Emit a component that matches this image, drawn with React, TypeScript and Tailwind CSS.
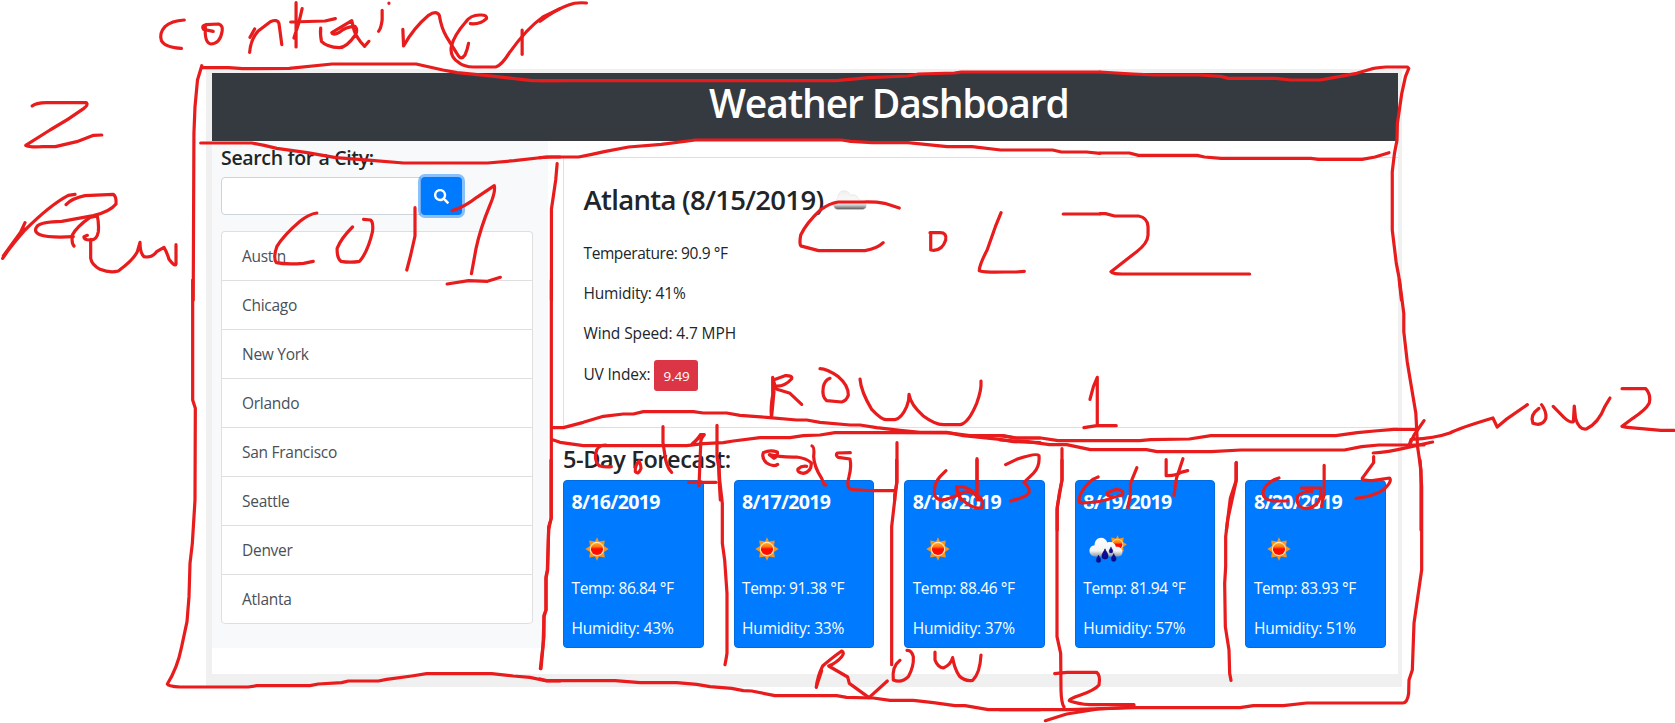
import { FaSearch } from "react-icons/fa";

const cities = ["Austin", "Chicago", "New York", "Orlando", "San Francisco", "Seattle", "Denver", "Atlanta"];

const forecast = [
  { date: "8/16/2019", icon: "sun", temp: "86.84", humidity: 43 },
  { date: "8/17/2019", icon: "sun", temp: "91.38", humidity: 33 },
  { date: "8/18/2019", icon: "sun", temp: "88.46", humidity: 37 },
  { date: "8/19/2019", icon: "rain", temp: "81.94", humidity: 57 },
  { date: "8/20/2019", icon: "sun", temp: "83.93", humidity: 51 },
];

const SUN_RAYS =
  "M0 -11.7 L2 -7.6 L7.8 -8.6 L7 -3 L11.7 0 L7 3 L7.8 8.6 L2 7.6 L0 11.7 L-2 7.6 L-7.8 8.6 L-7 3 L-11.7 0 L-7 -3 L-7.8 -8.6 L-2 -7.6 Z";

function Gradients() {
  return (
    <defs>
      <linearGradient id="sunCore" x1="0" y1="0" x2="0" y2="1">
        <stop offset="0" stopColor="#ffb020" />
        <stop offset="0.3" stopColor="#ff7a10" />
        <stop offset="0.5" stopColor="#ff0800" />
        <stop offset="1" stopColor="#ff1000" />
      </linearGradient>
      <linearGradient id="cloudFill" x1="0" y1="0" x2="0" y2="1">
        <stop offset="0" stopColor="#ffffff" />
        <stop offset="0.7" stopColor="#f4f4f4" />
        <stop offset="1" stopColor="#8f959c" />
      </linearGradient>
      <linearGradient id="greyCloud" x1="0" y1="0" x2="0" y2="1">
        <stop offset="0" stopColor="#f0f0f0" />
        <stop offset="0.6" stopColor="#fbfbfb" />
        <stop offset="0.78" stopColor="#c8c8c8" />
        <stop offset="1" stopColor="#505050" />
      </linearGradient>
    </defs>
  );
}

function SunIcon() {
  return (
    <svg className="size-[50px]" viewBox="-25 -25 50 50">
      <Gradients />
      <path d={SUN_RAYS} fill="#f7941d" />
      <circle r="7.2" fill="#ffe9b8" />
      <circle r="6.1" fill="url(#sunCore)" />
    </svg>
  );
}

function RainIcon() {
  const drop = "M0 -4.5 C0.6 -2.2 2.7 -0.6 2.7 1.7 A2.7 2.7 0 0 1 -2.7 1.7 C-2.7 -0.6 -0.6 -2.2 0 -4.5 Z";
  return (
    <svg className="size-[50px]" viewBox="0 0 50 50">
      <Gradients />
      <g transform="translate(34.5 20.5) scale(0.8)">
        <path d={SUN_RAYS} fill="#f7941d" />
        <circle r="7.2" fill="#ffe0a0" />
        <circle r="6.1" fill="url(#sunCore)" />
      </g>
      <path
        d="M12 32.5 C8.500 32.500 6.500 29.500 6.500 27 C6.500 23.500 8.800 21.500 11.500 21.300 C11.800 16.500 14.500 13.800 18 13.800 C21 13.800 23.300 15.600 24.300 18.500 C28.500 17 32.300 19 32.800 22.800 C36.500 22.500 39.500 24.500 39.500 28 C39.500 31 37.500 32.500 35 32.500 Z"
        fill="url(#cloudFill)"
      />
      <g fill="#0a0a9c" stroke="#06064e" strokeWidth="0.5">
        <path d={drop} transform="translate(22 30) scale(1.15)" />
        <path d={drop} transform="translate(28 26) scale(0.7)" />
        <path d={drop} transform="translate(15.500 34.800) scale(0.85)" />
        <path d={drop} transform="translate(30.700 33.500) scale(0.9)" />
      </g>
    </svg>
  );
}

function CloudIcon() {
  return (
    <svg className="mt-px ml-[10px] h-5 w-[34px]" viewBox="0 0 34 19" preserveAspectRatio="none">
      <Gradients />
      <path
        d="M5 18.500 C1.500 18.500 0.500 15.800 0.700 14 C0.900 11.200 2.600 9 4.700 8 C4.700 3.500 7.500 0.700 11 0.700 C14 0.700 16.300 2.500 17.500 5 C21 3.500 25 5.500 25.600 9.300 C30 9.500 33.300 11.500 33.300 15 C33.300 17.500 31.500 18.500 29 18.500 Z"
        fill="url(#greyCloud)"
        stroke="#dddddd"
        strokeWidth="0.5"
      />
    </svg>
  );
}

type InkGroup = { x: number; y: number; sx: number; sy: number; paths: string[] };

const W28 = 1 / 2.8;
const T3 = 1 / 3;

const ink: InkGroup[] = [
  {
    x: 0, y: 0, sx: W28, sy: T3,
    paths: [
      // outer frame: left side and top
      "M1568 242 H1490 L1410 232 L1365 227 L1280 218 L1240 210 L1165 192 H930 L810 205 L680 206 L640 203 H565",
      "M565 197 L553 240 L546 320 L543 400 L541 900",
      // header underline
      "M562 429 H705 L740 436 L775 445 L860 458 L940 473 L1040 481 L1130 489 H1365 L1440 482 L1530 471 H1568",
      // container
      "M516 60 Q480 62 462 80 Q445 100 452 122 Q462 142 508 145",
      "M597 94 L570 88 Q563 78 576 74 L612 72 Q625 76 622 94 Q616 132 590 132 Q572 128 575 80",
      "M713 87 L700 112 M699 157 Q702 118 722 94 L757 65 Q777 56 781 70 Q785 100 789 134",
      "M829 8 V141 M846 26 Q838 70 823 114 M814 66 L910 63 L939 56",
      "M929 98 L985 62 L990 86 Q994 104 1010 126 L1021 139 L1033 124 M929 98 Q932 108 950 97 Q968 80 994 79 Q1003 90 995 105 Q970 143 950 143 Q915 141 900 124 Q896 100 898 84",
      "M1070 31 V60 Q1067 85 1060 94 M1089 9 V10",
      "M1128 88 L1130 138 Q1158 84 1200 46 Q1222 30 1230 46 Q1236 85 1250 110 Q1270 145 1282 165 Q1291 182 1302 165 Q1309 148 1312 130",
      "M1317 71 Q1345 74 1362 56 Q1365 44 1345 45 Q1318 44 1304 66 Q1272 105 1264 138 Q1258 170 1285 188 Q1300 200 1325 201 L1388 201 Q1405 195 1425 160 Q1475 85 1520 51 L1568 26",
      "M1462 90 V163",
      // Z
      "M90 318 Q100 309 130 308 H242 Q248 314 235 325 Q190 360 140 390 L72 436 Q80 442 120 440 H155 L215 425 L262 406 L285 405",
      // col 1
      "M887 639 Q865 642 840 664 Q795 705 775 740 Q764 775 774 788 Q800 794 850 790 L877 784",
      "M987 681 Q955 715 944 745 Q943 775 955 784 Q980 789 1007 784 Q1030 755 1043 695 Q1046 668 1038 660 L1018 658",
      "M1162 623 V708 L1150 765 L1139 810",
      "M1266 632 Q1300 622 1335 592 L1384 557 Q1388 575 1372 615 Q1345 685 1333 745 L1320 821",
      "M1252 852 L1312 842 L1365 844 L1401 832",
      // divider after column 1
      "M1560 491 L1556 540 L1544 628 V900",
    ],
  },
  {
    x: 540, y: 0, sx: W28, sy: T3,
    paths: [
      "M0 64 Q45 28 80 15 Q100 6 130 9",
      "M1568 216 H1180 L1160 219 L1060 222 L1030 228 L920 233 L830 242 H0",
      "M0 473 L30 471 H108 L145 463 L180 455 L248 441 L340 433 L435 420 H845 L870 424 L930 428 H1030 L1140 440 H1210 L1290 450 H1435 L1460 456 H1530 L1568 460",
      "M1006 624 L965 610 Q940 605 905 606 H835 Q810 610 785 630 Q745 670 730 705 Q724 740 735 739 L780 752 H910 Q945 745 961 728",
      "M1094 700 V750 Q1125 756 1136 720 Q1140 698 1120 698 H1092",
      "M1291 638 L1275 680 L1252 750 Q1230 795 1230 812 Q1250 818 1300 816 H1333 L1356 814",
      "M1465 642 H1568",
    ],
  },
  {
    x: 1100, y: 0, sx: 1 / 2.727, sy: T3,
    paths: [
      "M822 900 L815 830 L808 790 L797 690 V515 L803 460 L810 420 L811 370 L823 280 L833 230 L842 205 L838 201 H780 Q745 204 740 207 L700 220 L640 232 L600 240 H520 L480 235 H350 L330 229 L270 225 H150 L90 222 L0 216",
      "M0 459 H80 L105 466 H265 L285 471 L330 475 H575 L595 478 H715 L750 471 L788 458",
      "M0 641 H15 L40 648 H105 Q130 653 131 680 V705 Q130 730 100 755 L30 815 Q35 822 60 822 H408",
    ],
  },
  {
    x: 160, y: 280, sx: T3, sy: T3,
    paths: [
      "M98 0 V360 L106 385 L105 660 L97 790 L90 850 L87 950 L81 1025 L65 1100 Q52 1165 22 1212 Q25 1219 60 1221 H265 L290 1217 H450 L475 1212 L545 1208 L565 1203 H655 L680 1198 L755 1188 L800 1181 H995 L1060 1188 L1110 1192 L1160 1203 H1200",
      "M1174 0 V715 L1166 740 L1163 870 L1158 895 V990 L1152 1005 V1070 L1141 1166",
    ],
  },
  {
    x: 540, y: 280, sx: T3, sy: T3,
    paths: [
      // long strokes under the current-weather card
      "M40 443 H70 L130 427 L190 409 L250 402 H280 L310 395 H460 L490 399 H560 L600 406 L680 412 L770 420 H800 L840 427 L930 435 H960 L1010 443 L1080 451 L1140 457 H1220 L1270 467 L1380 478 L1420 485 L1500 488",
      "M40 480 L60 487 L130 497 H440 L490 491 L550 488 L580 483 L660 473 H750 L790 467 L840 465 L885 458 H1070 L1230 459 L1290 467 H1390 L1430 474 H1500",
      // ROW
      "M694 408 Q692 380 698 345 V292 L705 318 Q735 320 755 296 Q758 286 735 287 L700 300 M706 326 Q730 333 750 340 L785 373",
      "M695 408 L702 335",
      "M840 266 Q860 266 895 290 Q925 315 925 345 Q920 362 905 366 L860 362 Q845 350 850 320 Q855 300 870 295",
      "M960 297 Q963 335 995 388 Q1025 420 1040 419 H1065 Q1085 415 1100 380 Q1108 360 1107 343 Q1112 375 1150 408 Q1185 434 1210 434 H1260 Q1285 430 1310 370 Q1325 330 1323 303",
      // col 1
      "M198 495 Q178 495 170 510 Q160 540 177 557 Q195 562 214 560",
      "M298 543 Q284 555 286 575 Q296 585 303 565 Q302 548 296 545",
      "M369 440 V488 L377 540 Q384 567 395 577",
      "M457 491 Q475 475 481 464 H493 Q480 478 482 495 L477 618 M460 490 L478 472",
      "M446 607 H528",
      "M531 436 V530 L536 560 L538 610 L541 660",
      // col 2
      "M713 553 Q700 562 680 549 Q664 535 670 518 Q690 508 712 516 Q714 530 702 535 L688 524 Q720 532 770 531 Q800 535 814 549 Q815 575 790 580 Q770 577 774 567 Q785 557 800 559",
      "M816 498 Q824 500 821 530 Q822 560 845 595 L853 615 L858 615",
      "M931 518 L892 519 Q885 526 895 532 L930 537 Q935 560 927 590 Q918 620 930 627 Q965 633 1065 632",
      "M1071 488 V605 L1064 645 V660",
      // col 3
      "M1218 572 L1200 590 Q1182 610 1183 640 Q1187 665 1220 658 L1255 645",
      "M1250 622 L1255 640 L1262 660 M1250 622 Q1275 615 1300 636 L1318 660",
      "M1311 536 V660",
      "M1397 554 L1430 538 Q1490 518 1497 527 Q1500 560 1480 580 L1452 607 Q1472 625 1466 640 Q1455 653 1412 663",
    ],
  },
  {
    x: 1000, y: 280, sx: 1 / 2.323, sy: T3,
    paths: [
      "M928 0 L938 100 V155 L946 245 L953 300 L966 400 L970 500 L978 570 V750",
      "M0 467 L35 474 H95 L135 482 H325 L350 479 L440 477 L490 467 H780 L830 458 L870 453 L915 448 H970",
      "M0 480 L65 485 L115 494 H155 L210 509 H340 L365 515 H490 L560 510 H800 L840 500 L880 495 H985",
      "M867 519 Q900 517 945 503 L1005 486",
      "M985 422 L962 465 L950 498 L955 478 Q1010 475 1045 459 Q1065 445 1145 414 L1155 441 L1175 419 L1225 374",
      "M1252 385 Q1230 405 1238 430 Q1260 440 1268 415 Q1270 395 1258 374",
      "M1285 379 L1310 412 Q1325 430 1332 425 L1334 378 L1337 415 Q1345 450 1362 447 Q1390 430 1405 380 L1417 354",
      "M1445 326 H1500 Q1513 345 1508 370 Q1500 390 1470 415 L1445 439 Q1460 443 1490 446 L1535 451 H1566",
      "M209 358 L217 320 L226 292 V437 M195 443 L225 437 H270",
      // divider 3/4
      "M144 506 V600 L138 645 L133 680 V750",
      // col 4
      "M228 591 Q205 600 188 640 Q178 668 190 669 Q245 665 258 654 L284 645 Q290 630 270 628 L248 639 Q250 653 268 651",
      "M318 563 L303 610 V645 L297 682",
      "M386 539 V587 Q410 588 420 577 L436 572 M425 536 L410 595 L404 646",
      // divider 4/5
      "M549 547 V600 L535 655 L526 750",
      // col 5
      "M648 594 Q618 605 611 635 Q610 662 640 663 H668",
      "M700 624 H745 V650 Q735 685 710 686 Q685 680 692 648 Q705 632 725 634",
      "M753 556 V640 L747 679",
      "M868 530 V548 L843 592 Q835 602 865 602 L905 594 Q912 605 890 630 Q870 648 827 655",
    ],
  },
  {
    x: 540, y: 460, sx: T3, sy: T3,
    paths: [
      "M0 657 L20 662 H225 L300 668 H410 L470 673 L510 680 L575 685 L610 692 L635 693 L705 707 H890 L920 712 L1000 714 L1050 721 H1120 L1180 728 L1245 737 L1275 737 L1345 749 H1500",
      "M33 0 V175 L26 210 L22 330 L18 350 V450 L12 470 L9 560 L3 626",
      "M536 0 L539 60 L547 130 V250 L554 300 L561 400 V580 Q558 600 555 614",
      "M1070 0 V70 L1063 130 L1055 200 V614",
      "M1250 80 Q1250 100 1262 115 Q1300 150 1325 143 Q1335 125 1315 108 Q1285 88 1262 100 M1311 0 V100",
      // ROW
      "M829 682 Q832 650 848 618 Q870 598 905 573 Q915 578 905 590 Q890 608 866 618 L923 651 L928 670 L987 713 L1042 663",
      "M829 680 L845 632",
      "M1080 601 Q1055 620 1060 660 Q1085 670 1105 650 Q1122 620 1120 590 Q1115 570 1101 571",
      "M1185 576 V600 Q1193 622 1210 624 Q1232 615 1238 593 Q1243 625 1258 648 Q1275 665 1298 661 Q1320 640 1323 585",
    ],
  },
  {
    x: 1000, y: 460, sx: T3, sy: T3,
    paths: [
      "M0 749 H210 L405 743 H720 L760 737 H850 L920 729 H1208 Q1222 730 1226 700 L1227 660 L1237 630 L1242 490 L1252 420 L1265 330 V80 L1260 0",
      "M186 0 V60 L178 100 L171 150 V530 L182 580 L183 690 Q184 730 192 741",
      "M164 641 L200 637 H290 Q302 645 297 675 Q285 690 240 706 Q205 718 208 722 Q235 732 270 734 H402",
      "M136 782 L200 762 L295 747 L405 741",
      "M708 9 V65 L683 180 L677 230 V320 L674 370 L676 500 L687 570 L689 640 L693 661",
    ],
  },
  {
    x: 0, y: 180, sx: T3, sy: T3,
    paths: [
      "M225 43 L205 46 Q150 75 75 150 Q40 190 22 215 L8 235 M75 128 L60 160 L10 228 L70 145",
      "M198 74 Q215 55 255 47 L340 43 Q350 50 348 72 Q330 95 280 107 L185 124 Q125 125 112 138 Q98 155 120 164 Q145 174 220 170",
      "M222 198 Q214 190 217 165 Q230 140 270 112 L292 108 Q297 130 295 155 Q290 182 270 180 Q250 180 252 170 L262 166 M272 178 V235 Q275 255 300 268 Q330 280 355 273 Q400 240 412 215 L420 187 Q420 220 432 230 Q455 235 470 215 L492 202 Q500 215 507 238 Q525 262 528 252 V194",
    ],
  },
];

function Annotations() {
  return (
    <svg
      className="pointer-events-none absolute inset-0 h-[723px] w-[1675px]"
      viewBox="0 0 1675 723"
      fill="none"
      stroke="#e81c1c"
      strokeWidth="3.2"
      strokeLinecap="round"
      strokeLinejoin="round"
    >
      {ink.map((g, i) => (
        <g key={i} transform={`translate(${g.x} ${g.y}) scale(${g.sx} ${g.sy})`}>
          {g.paths.map((d) => (
            <path key={d} d={d} vectorEffect="non-scaling-stroke" />
          ))}
        </g>
      ))}
    </svg>
  );
}

function Sidebar() {
  return (
    <aside className="h-[507px] w-[336px] shrink-0 bg-[#f8f9fa] pt-[5px] pl-[9px]">
      <h3 className="text-[19.5px] leading-6 font-semibold tracking-[-0.34px]">Search for a City:</h3>
      <div className="mt-[7px] flex h-[38px]">
        <input
          aria-label="City"
          className="w-[200px] rounded-l border border-[#ced4da] bg-white px-3 outline-none"
        />
        <button
          aria-label="Search"
          className="flex w-[41px] items-center justify-center rounded bg-[#007bff] text-white ring-3 ring-[#007bff]/45"
        >
          <FaSearch className="size-[15px]" />
        </button>
      </div>
      <ul className="mt-4 w-[312px] overflow-hidden rounded border border-b-0 border-[#dfdfdf] bg-white">
        {cities.map((city) => (
          <li
            key={city}
            className="h-[49px] border-b border-[#dfdfdf] pl-5 text-[15.5px] leading-[49px] tracking-[-0.28px] text-[#495057] last:rounded-b"
          >
            {city}
          </li>
        ))}
      </ul>
    </aside>
  );
}

function CurrentWeather() {
  return (
    <section className="mt-4 h-[271px] border border-r-0 border-[#dfdfdf] pt-[25px] pl-[19.5px] text-[15.5px] leading-6">
      <div className="flex h-[34px]">
        <h2 className="text-[27.5px] leading-[34px] font-semibold tracking-[-0.69px] whitespace-nowrap">
          Atlanta (8/15/2019)
        </h2>
        <div className="pt-[6px]">
          <CloudIcon />
        </div>
      </div>
      <p className="mt-[23.5px] tracking-[-0.41px]">Temperature: 90.9 °F</p>
      <p className="mt-4 tracking-[-0.19px]">Humidity: 41%</p>
      <p className="mt-4 tracking-[-0.12px]">Wind Speed: 4.7 MPH</p>
      <div className="mt-[15.5px] flex h-[31px] gap-1 tracking-[-0.2px]">
        <span className="pt-[2px]">UV Index:</span>
        <span className="w-[44px] rounded-[3px] bg-[#dc3545] text-center text-[13.5px] leading-[32px] text-white">
          9.49
        </span>
      </div>
    </section>
  );
}

function Forecast() {
  return (
    <section className="mt-[17px]">
      <h3 className="text-[23.5px] leading-[29px] font-semibold tracking-[-0.38px]">5-Day Forecast:</h3>
      <div className="mt-[6px] grid w-[823px] grid-cols-5 gap-[30px]">
        {forecast.map((day) => (
          <article
            key={day.date}
            className="h-[168px] rounded border border-[#006cdf] bg-[#007bff] px-[7.5px] pt-[9px] text-[15.5px] leading-6 whitespace-nowrap text-white"
          >
            <h4 className="text-[19.5px] font-bold tracking-[-0.66px]">{day.date}</h4>
            <div className="mt-[10px] mb-[1.5px] h-[50px]">{day.icon === "sun" ? <SunIcon /> : <RainIcon />}</div>
            <p className="tracking-[-0.38px]">Temp: {day.temp} °F</p>
            <p className="mt-4 tracking-[-0.19px]">Humidity: {day.humidity}%</p>
          </article>
        ))}
      </div>
    </section>
  );
}

export default function App() {
  return (
    <div className="relative h-[723px] w-[1675px] overflow-hidden bg-white pt-[69px] pl-[206px] font-['Open_Sans','Noto_Sans',sans-serif] text-[#212529]">
      <div className="h-[618px] w-[1196px] bg-[#f0f0f0] pt-1 pr-1 pb-[13px] pl-1.5">
        <div className="h-[601px] bg-white">
          <header className="h-[68px] bg-[#343a40] pt-[6px] pl-[497px]">
            <h1 className="text-[39px] leading-[48px] font-semibold tracking-[-1.1px] text-white">
              Weather Dashboard
            </h1>
          </header>
          <div className="flex">
            <Sidebar />
            <main className="min-w-0 flex-1 pl-[15px]">
              <CurrentWeather />
              <Forecast />
            </main>
          </div>
        </div>
      </div>
      <Annotations />
    </div>
  );
}
